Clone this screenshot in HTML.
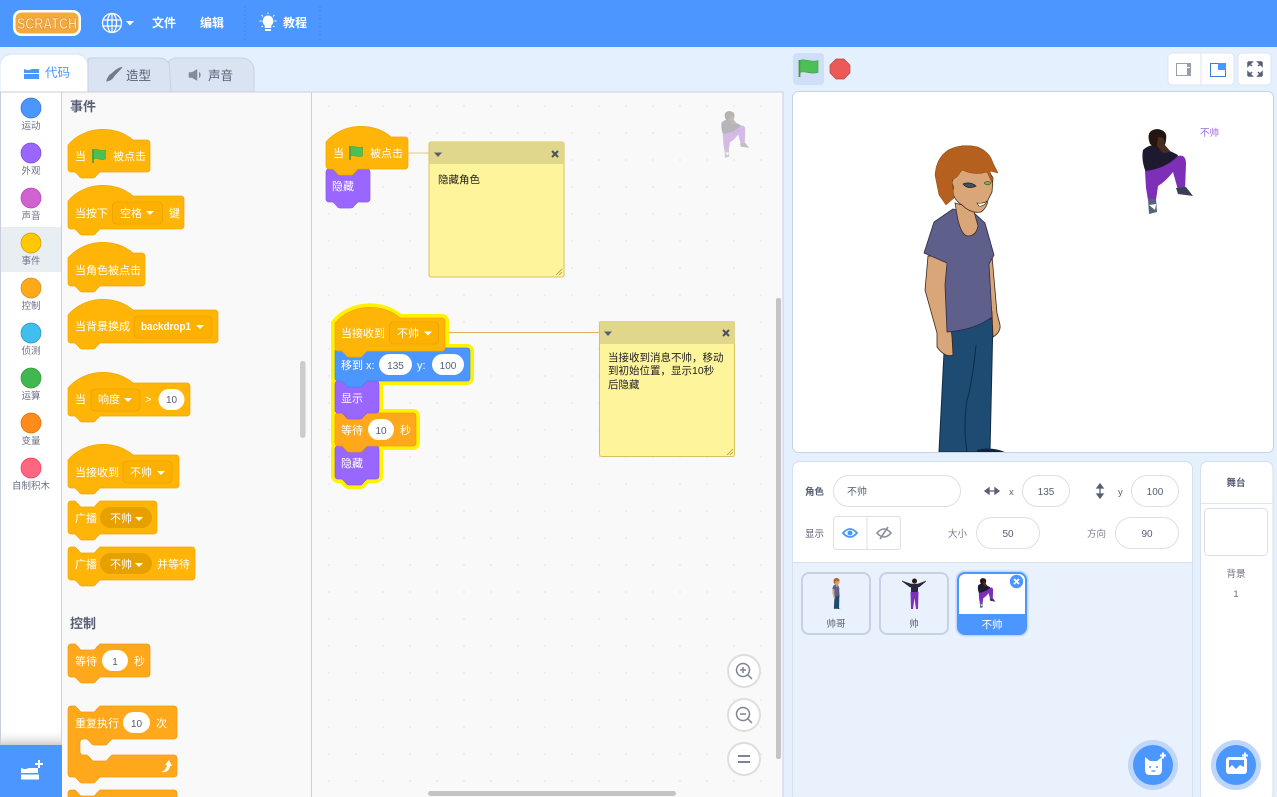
<!DOCTYPE html>
<html lang="zh"><head><meta charset="utf-8"><title>Scratch</title>
<style>
html,body{margin:0;padding:0;width:1277px;height:797px;overflow:hidden;background:#E5F0FF}
svg{display:block;position:absolute;left:0;top:0}
text{font-family:"Liberation Sans","Noto Sans CJK SC",sans-serif}
.w{fill:#fff;font-size:11px}
.g{fill:#6b7186;font-size:9.5px;text-anchor:middle}
.n{fill:#575E75;font-size:10px;text-anchor:middle}
.h{fill:#575E75;font-size:13px;font-weight:bold}
.c{fill:#222;font-size:10.5px}
.l{fill:#575E75;font-size:9.5px}
.t{fill:#fff;font-size:12px;font-weight:bold}
.e{fill:#FFB508;stroke:#EFA800;stroke-width:.7}
.o{fill:#FFA81C;stroke:#EC9A10;stroke-width:.7}
.p{fill:#9966FF;stroke:#8A55EE;stroke-width:.7}
.b{fill:#4C97FF;stroke:#4088EC;stroke-width:.7}
.d{fill:#FCB100;stroke:#EBA200;stroke-width:.8}
.y{fill:#FFF200;stroke:#FFF200;stroke-width:8;stroke-linejoin:round}
</style></head><body>
<svg width="1277" height="797" viewBox="0 0 1277 797" xmlns="http://www.w3.org/2000/svg">
<defs>
<pattern id="dots" x="328" y="105" width="27" height="27" patternUnits="userSpaceOnUse"><rect width="2" height="2" fill="#eeeeee"/></pattern>
<linearGradient id="sh" x1="0" y1="0" x2="0" y2="1"><stop offset="0" stop-color="#fff" stop-opacity="0"/><stop offset="1" stop-color="#cfcfcf"/></linearGradient>
<clipPath id="stageclip"><rect x="793" y="92" width="480" height="360"/></clipPath>
<symbol id="flag" overflow="visible" viewBox="0 0 16 16" width="16" height="16"><path d="M2 1V15" stroke="#45993D" stroke-width="1.600" fill="none"/><path d="M2.500 2c4-2 7 2 12 0v9c-5 2-8-2-12 0z" fill="#4CBF56" stroke="#45993D" stroke-width=".5"/></symbol>
<g id="boy">
 <path d="M945 333L939 452H990L993 318z" fill="#1D4B72" stroke="#0d2c47" stroke-width="1"/>
 <path d="M976 345Q972 385 967 400Q963 425 967 452" fill="none" stroke="#0d2c47" stroke-width="1"/>
 <path d="M977 450Q992 446 1007 453H977z" fill="#0d2440"/>
 <path d="M928 256L925 290L937 333L937 347Q945 358 953 355L952 337L946 285L948 256z" fill="#D9A679" stroke="#3a2515" stroke-width=".8"/>
 <path d="M983 256L987 287L992 312L993 337Q1001 332 1000 325L997 313L995 290L992 256z" fill="#D9A679" stroke="#3a2515" stroke-width=".8"/>
 <path d="M953 209L934 222L924 253L947 263L945 285L947 332Q975 330 992 317L989 264L994 255L985 223L973 212z" fill="#5E5F8B" stroke="#2c2c4a" stroke-width=".8"/>
 <path d="M955 203L958 220Q962 236 968 236Q976 236 978 226L973 208z" fill="#D9A679" stroke="#3a2515" stroke-width=".7"/>
 <path d="M956 168L951 186Q953 200 962 205Q971 214 981 212Q987 208 988 200L992 192L993 178L985 165z" fill="#D9A679" stroke="#3a2515" stroke-width=".8"/>
 <ellipse cx="949" cy="188" rx="4.500" ry="6" fill="#D9A679" stroke="#3a2515" stroke-width=".7"/>
 <path d="M963 184Q970 181 976 186Q968 190 963 184z" fill="#46505a" stroke="#222" stroke-width=".7"/>
 <path d="M984 183Q988 180 991 183Q988 187 984 183z" fill="#6dbb3d" stroke="#222" stroke-width=".5"/>
 <path d="M977 203Q983 204 987 201Q984 207 979 206z" fill="#fff" stroke="#3a2515" stroke-width=".6"/>
 <path d="M935 175Q936 158 948 150Q962 143 978 147Q990 152 993 163L998 173L990 171L993 185L987 172Q975 176 962 170L957 177L952 180L954 198L946 205L939 195z" fill="#B5601F" stroke="#8b4513" stroke-width=".5"/>
</g>
<g id="kneel">
 <path d="M1143 150Q1150 143 1160 146L1178 155L1172 172L1146 173Q1141 160 1143 150z" fill="#1d1a30"/>
 <path d="M1145 171Q1165 169 1178 156Q1186 154 1186 164L1185 190L1178 190L1173 172Q1165 182 1158 186L1156 200L1148 200L1146 188z" fill="#7E2FB8"/>
 <path d="M1150 144Q1145 130 1157 129Q1168 130 1166 140Q1165 150 1157 149z" fill="#241510"/>
 <path d="M1158 137Q1166 137 1164 144L1171 152L1163 153L1157 146z" fill="#4a2c20"/>
 <path d="M1176 188L1186 187L1193 196L1178 194z" fill="#3a4050"/>
 <path d="M1148 199L1156 199L1157 212L1149 214z" fill="#56637a"/>
 <path d="M1149 205L1156 204L1155 210z" fill="#fff"/>
</g>
</defs>

<!-- header -->
<rect width="1277" height="47" fill="#4C97FF"/>
<rect x="13" y="10" width="68" height="26" rx="8" fill="#fff"/>
<rect x="15.500" y="12.500" width="63" height="21" rx="6" fill="#F7A93C"/>
<text x="17" y="29" textLength="60" lengthAdjust="spacingAndGlyphs" style="font-family:'Liberation Sans',sans-serif;font-size:16px;font-weight:bold;fill:#FFE6B8" stroke="#D0841C" stroke-width=".5">SCRATCH</text>
<g fill="none" stroke="#fff" stroke-width="1.300"><circle cx="112" cy="23" r="9.500"/><ellipse cx="112" cy="23" rx="4.500" ry="9.500"/><path d="M103 20H121M103 26H121M112 13.500V32.500"/></g>
<path d="M126 21H134L130 25.500z" fill="#fff"/>
<text class="t" x="152" y="27">文件</text><text class="t" x="200" y="27">编辑</text>
<path d="M245 6V40M320 6V40" stroke="#3F88EA" stroke-width="1" stroke-dasharray="2 2"/>
<path d="M268 15.500a5.500 5.500 0 0 1 3.300 9.800V28H264.700V25.300A5.500 5.500 0 0 1 268 15.500z" fill="#fff"/><rect x="265" y="29" width="6" height="2" fill="#fff"/>
<path d="M259.500 21H261.500M274.500 21H276.500M261.500 15L263 16.500M274.500 15L273 16.500M268 12.500V14M261.500 27L263 26M274.500 27L273 26" stroke="#fff" stroke-width="1"/>
<text class="t" x="283" y="27">教程</text>

<!-- tabs -->
<path d="M88 92V66a12 12 0 0 0-12-12H12A12 12 0 0 0 0 66V92z" fill="#fff" stroke="#D9E3F2"/>
<path d="M171 92V70a12 12 0 0 0-12-12H90L88 59V92z" fill="#D9E3F2" stroke="#C6D2E2"/>
<path d="M254 92V70a12 12 0 0 0-12-12H176a12 12 0 0 0-7 3L171 92z" fill="#D9E3F2" stroke="#C6D2E2"/>
<path d="M24 69l3 1h2l3-1h7v4H24zM24 74h15v5H24z" fill="#4C97FF"/>
<text x="45" y="77" style="font-size:12.500px;fill:#4C97FF">代码</text>
<path d="M106 81.500Q112 81 114.500 76L122 68Q123 67 121.500 67Q117 68 112 73Q108 75 106 81.500z" fill="#75798A"/>
<text x="126" y="80" style="font-size:12.500px;fill:#575E75">造型</text>
<path d="M189 72.500H192L197 69.500V80.500L192 77.500H189zM199 72Q202 75 199 78" fill="#85899a" stroke="#85899a" stroke-width=".5"/>
<text x="208" y="80" style="font-size:12.500px;fill:#575E75">声音</text>

<!-- left panels -->
<rect x="0" y="92" width="783" height="705" fill="#F9F9F9"/>
<rect x="0" y="92" width="62" height="705" fill="#fff"/>
<rect x="312" y="92" width="471" height="705" fill="#F9F9F9"/>
<rect x="312" y="92" width="471" height="705" fill="url(#dots)"/>
<path d="M.5 797V92H783V797M61.500 92V797M311.500 92V797" fill="none" stroke="#C9D0DB"/>
<rect x="1" y="227" width="60" height="45" fill="#E9EEF2"/>
<circle cx="31" cy="108" r="10" fill="#4C97FF" stroke="#3373CC" stroke-width=".7"/><text class="g" x="31" y="129">运动</text>
<circle cx="31" cy="153" r="10" fill="#9966FF" stroke="#774DCB" stroke-width=".7"/><text class="g" x="31" y="174">外观</text>
<circle cx="31" cy="198" r="10" fill="#CF63CF" stroke="#BD42BD" stroke-width=".7"/><text class="g" x="31" y="219">声音</text>
<circle cx="31" cy="243" r="10" fill="#FFC800" stroke="#CC9900" stroke-width=".7"/><text class="g" x="31" y="264">事件</text>
<circle cx="31" cy="288" r="10" fill="#FFAB19" stroke="#CF8B17" stroke-width=".7"/><text class="g" x="31" y="309">控制</text>
<circle cx="31" cy="333" r="10" fill="#40BFEF" stroke="#2E8EB8" stroke-width=".7"/><text class="g" x="31" y="354">侦测</text>
<circle cx="31" cy="378" r="10" fill="#3FB94F" stroke="#389438" stroke-width=".7"/><text class="g" x="31" y="399">运算</text>
<circle cx="31" cy="423" r="10" fill="#FF8C1A" stroke="#DB6E00" stroke-width=".7"/><text class="g" x="31" y="444">变量</text>
<circle cx="31" cy="468" r="10" fill="#FF6680" stroke="#FF3355" stroke-width=".7"/><text class="g" x="31" y="489">自制积木</text>
<rect x="1" y="729" width="60" height="16" fill="url(#sh)"/>
<rect x="0" y="745" width="62" height="52" fill="#4C97FF"/>
<path d="M21 768l3 1h2l3-1h9v5H21zM21 774.500h18v5H21z" fill="#fff"/><path d="M35 764H43M39 760V768" stroke="#fff" stroke-width="2"/>

<!-- palette -->
<text class="h" x="70" y="111">事件</text>
<path class="e" transform="translate(68 140)" d="M0 5c17-20 48-20 65-5h14a3 3 0 0 1 3 3v26a3 3 0 0 1-3 3H32l-4 4q-1 2-3 2H14q-2 0-3-2l-4-4H3a3 3 0 0 1-3-3z"/>
<text class="w" x="75" y="160">当</text><use href="#flag" x="91" y="148"/><text class="w" x="113" y="160">被点击</text>

<path class="e" transform="translate(68 196)" d="M0 5c17-20 48-20 65-5h48a3 3 0 0 1 3 3v27a3 3 0 0 1-3 3H32l-4 4q-1 2-3 2H14q-2 0-3-2l-4-4H3a3 3 0 0 1-3-3z"/>
<text class="w" x="75" y="217">当按下</text><rect class="d" x="112.500" y="202" width="50" height="22" rx="4"/><text class="w" x="120" y="217">空格</text><path d="M146 211H154L150 215z" fill="#fff"/><text class="w" x="169" y="217">键</text>

<path class="e" transform="translate(68 253)" d="M0 5c17-20 48-20 65-5h9a3 3 0 0 1 3 3v27a3 3 0 0 1-3 3H32l-4 4q-1 2-3 2H14q-2 0-3-2l-4-4H3a3 3 0 0 1-3-3z"/>
<text class="w" x="75" y="274">当角色被点击</text>

<path class="e" transform="translate(68 310)" d="M0 5c17-20 48-20 65-5h82a3 3 0 0 1 3 3v27a3 3 0 0 1-3 3H32l-4 4q-1 2-3 2H14q-2 0-3-2l-4-4H3a3 3 0 0 1-3-3z"/>
<text class="w" x="75" y="330">当背景换成</text><rect class="d" x="134" y="316" width="78" height="22" rx="4"/><text class="w" x="141" y="330" font-weight="bold" textLength="50" lengthAdjust="spacingAndGlyphs">backdrop1</text><path d="M196 325H204L200 329z" fill="#fff"/>

<path class="e" transform="translate(68 383)" d="M0 5c17-20 48-20 65-5h54a3 3 0 0 1 3 3v27a3 3 0 0 1-3 3H32l-4 4q-1 2-3 2H14q-2 0-3-2l-4-4H3a3 3 0 0 1-3-3z"/>
<text class="w" x="75" y="403">当</text><rect class="d" x="91" y="389" width="49" height="22" rx="4"/><text class="w" x="98" y="403">响度</text><path d="M124 398H132L128 402z" fill="#fff"/><text class="w" x="145" y="403">&gt;</text><rect x="158.500" y="389" width="26" height="21" rx="10.500" fill="#fff"/><text class="n" x="171.500" y="403">10</text>

<path class="e" transform="translate(68 455)" d="M0 5c17-20 48-20 65-5h43a3 3 0 0 1 3 3v27a3 3 0 0 1-3 3H32l-4 4q-1 2-3 2H14q-2 0-3-2l-4-4H3a3 3 0 0 1-3-3z"/>
<text class="w" x="75" y="476">当接收到</text><rect class="d" x="123" y="461" width="49" height="22" rx="4"/><text class="w" x="130" y="476">不帅</text><path d="M157 471H165L161 475z" fill="#fff"/>

<path class="e" transform="translate(68 501)" d="M0 3a3 3 0 0 1 3-3h4l4 4q1 2 3 2h11q2 0 3-2l4-4h54a3 3 0 0 1 3 3v27a3 3 0 0 1-3 3H32l-4 4q-1 2-3 2H14q-2 0-3-2l-4-4H3a3 3 0 0 1-3-3z"/>
<text class="w" x="75" y="522">广播</text><rect x="100" y="507" width="52" height="21" rx="10.500" fill="#E6A000"/><text class="w" x="110" y="522">不帅</text><path d="M135 517H143L139 521z" fill="#fff"/>

<path class="e" transform="translate(68 547)" d="M0 3a3 3 0 0 1 3-3h4l4 4q1 2 3 2h11q2 0 3-2l4-4h92a3 3 0 0 1 3 3v27a3 3 0 0 1-3 3H32l-4 4q-1 2-3 2H14q-2 0-3-2l-4-4H3a3 3 0 0 1-3-3z"/>
<text class="w" x="75" y="568">广播</text><rect x="100" y="553" width="52" height="21" rx="10.500" fill="#E6A000"/><text class="w" x="110" y="568">不帅</text><path d="M135 563H143L139 567z" fill="#fff"/><text class="w" x="157" y="568">并等待</text>

<text class="h" x="70" y="628">控制</text>
<path class="o" transform="translate(68 644)" d="M0 3a3 3 0 0 1 3-3h4l4 4q1 2 3 2h11q2 0 3-2l4-4h47a3 3 0 0 1 3 3v27a3 3 0 0 1-3 3H32l-4 4q-1 2-3 2H14q-2 0-3-2l-4-4H3a3 3 0 0 1-3-3z"/>
<text class="w" x="75" y="665">等待</text><rect x="102" y="650" width="26" height="21" rx="10.500" fill="#fff"/><text class="n" x="115" y="665">1</text><text class="w" x="134" y="665">秒</text>

<path class="o" transform="translate(68 706)" d="M0 3a3 3 0 0 1 3-3h4l4 4q1 2 3 2h11q2 0 3-2l4-4h74a3 3 0 0 1 3 3v27a3 3 0 0 1-3 3H44l-4 4q-1 2-3 2H26q-2 0-3-2l-4-4h-4a3 3 0 0 0-3 3v10a3 3 0 0 0 3 3h4l4 4q1 2 3 2h11q2 0 3-2l4-4H106a3 3 0 0 1 3 3v16a3 3 0 0 1-3 3H32l-4 4q-1 2-3 2H14q-2 0-3-2l-4-4H3a3 3 0 0 1-3-3z"/>
<text class="w" x="75" y="727">重复执行</text><rect x="123" y="712" width="27" height="21" rx="10.500" fill="#fff"/><text class="n" x="136.500" y="727">10</text><text class="w" x="156" y="727">次</text>
<path d="M161 772Q166 771 167 765H165L169 760L172 766H170Q169 773 161 772z" fill="#fff"/>
<path class="o" transform="translate(68 790)" d="M0 3a3 3 0 0 1 3-3h4l4 4q1 2 3 2h11q2 0 3-2l4-4h74a3 3 0 0 1 3 3v27H0z"/>
<rect x="300" y="361" width="5.500" height="77" rx="2.500" fill="#CCCCCC"/>

<!-- workspace: stack 1 -->
<path d="M408 153H429" stroke="#E6C68C" stroke-width="1"/>
<path class="p" transform="translate(326 169)" d="M0 3a3 3 0 0 1 3-3h4l4 4q1 2 3 2h11q2 0 3-2l4-4h9a3 3 0 0 1 3 3v27a3 3 0 0 1-3 3H32l-4 4q-1 2-3 2H14q-2 0-3-2l-4-4H3a3 3 0 0 1-3-3z"/>
<path class="e" transform="translate(326 137)" d="M0 5c17-20 48-20 65-5h14a3 3 0 0 1 3 3v26a3 3 0 0 1-3 3H32l-4 4q-1 2-3 2H14q-2 0-3-2l-4-4H3a3 3 0 0 1-3-3z"/>
<text class="w" x="333" y="157">当</text><use href="#flag" x="348" y="145"/><text class="w" x="370" y="157">被点击</text>
<text class="w" x="332" y="190">隐藏</text>

<!-- comment 1 -->
<rect x="429" y="142" width="135" height="135" rx="2" fill="#FEF49C" stroke="#D9C25E"/>
<path d="M429.500 164V144a2 2 0 0 1 2-2H562a2 2 0 0 1 2 2V164z" fill="#E0D68C"/>
<path d="M434 152.500H442L438 157z" fill="#575E75"/>
<path d="M552 151L558 157M558 151L552 157" stroke="#4c4f5e" stroke-width="2"/>
<text class="c" x="438" y="183">隐藏角色</text>
<path d="M556 275L562 269M559 275L562 272" stroke="#a89a50" stroke-width=".8"/>

<!-- workspace stack 2 glow -->
<path d="M445 332.500H599" stroke="#E0B060" stroke-width="1"/>
<g class="y">
<path transform="translate(335 446)" d="M0 3a3 3 0 0 1 3-3h4l4 4q1 2 3 2h11q2 0 3-2l4-4h9a3 3 0 0 1 3 3v27a3 3 0 0 1-3 3H32l-4 4q-1 2-3 2H14q-2 0-3-2l-4-4H3a3 3 0 0 1-3-3z"/>
<path transform="translate(335 413)" d="M0 3a3 3 0 0 1 3-3h75a3 3 0 0 1 3 3v27a3 3 0 0 1-3 3H3a3 3 0 0 1-3-3z"/>
<path transform="translate(335 381)" d="M0 3a3 3 0 0 1 3-3h38a3 3 0 0 1 3 3v27a3 3 0 0 1-3 3H3a3 3 0 0 1-3-3z"/>
<path transform="translate(335 348)" d="M0 3a3 3 0 0 1 3-3h129a3 3 0 0 1 3 3v27a3 3 0 0 1-3 3H3a3 3 0 0 1-3-3z"/>
<path transform="translate(335 318)" d="M0 5c17-20 48-20 65-5h42a3 3 0 0 1 3 3v27a3 3 0 0 1-3 3H3a3 3 0 0 1-3-3z"/>
</g>
<path class="p" transform="translate(335 446)" d="M0 3a3 3 0 0 1 3-3h4l4 4q1 2 3 2h11q2 0 3-2l4-4h9a3 3 0 0 1 3 3v27a3 3 0 0 1-3 3H32l-4 4q-1 2-3 2H14q-2 0-3-2l-4-4H3a3 3 0 0 1-3-3z"/>
<path class="o" transform="translate(335 413)" d="M0 3a3 3 0 0 1 3-3h4l4 4q1 2 3 2h11q2 0 3-2l4-4h46a3 3 0 0 1 3 3v27a3 3 0 0 1-3 3H32l-4 4q-1 2-3 2H14q-2 0-3-2l-4-4H3a3 3 0 0 1-3-3z"/>
<path class="p" transform="translate(335 381)" d="M0 3a3 3 0 0 1 3-3h4l4 4q1 2 3 2h11q2 0 3-2l4-4h9a3 3 0 0 1 3 3v26a3 3 0 0 1-3 3H32l-4 4q-1 2-3 2H14q-2 0-3-2l-4-4H3a3 3 0 0 1-3-3z"/>
<path class="b" transform="translate(335 348)" d="M0 3a3 3 0 0 1 3-3h4l4 4q1 2 3 2h11q2 0 3-2l4-4h100a3 3 0 0 1 3 3v27a3 3 0 0 1-3 3H32l-4 4q-1 2-3 2H14q-2 0-3-2l-4-4H3a3 3 0 0 1-3-3z"/>
<path class="e" transform="translate(335 318)" d="M0 5c17-20 48-20 65-5h42a3 3 0 0 1 3 3v27a3 3 0 0 1-3 3H32l-4 4q-1 2-3 2H14q-2 0-3-2l-4-4H3a3 3 0 0 1-3-3z"/>
<text class="w" x="341" y="337">当接收到</text><rect class="d" x="389.500" y="322" width="49" height="22" rx="4"/><text class="w" x="397" y="337">不帅</text><path d="M424 331.500H432L428 335.500z" fill="#fff"/>
<text class="w" x="341" y="369">移到 x:</text><rect x="379" y="354" width="33" height="21" rx="10.500" fill="#fff"/><text class="n" x="395.500" y="369">135</text><text class="w" x="417" y="369">y:</text><rect x="432" y="354" width="32" height="21" rx="10.500" fill="#fff"/><text class="n" x="448" y="369">100</text>
<text class="w" x="341" y="402">显示</text>
<text class="w" x="341" y="434">等待</text><rect x="368" y="419" width="26" height="21" rx="10.500" fill="#fff"/><text class="n" x="381" y="434">10</text><text class="w" x="400" y="434">秒</text>
<text class="w" x="341" y="467">隐藏</text>

<!-- comment 2 -->
<rect x="599.500" y="321.500" width="135" height="135" rx="2" fill="#FEF49C" stroke="#D9C25E"/>
<path d="M600 344V323a2 2 0 0 1 2-2H733a2 2 0 0 1 2 2V344z" fill="#E0D68C"/>
<path d="M604 331.500H612L608 336z" fill="#575E75"/>
<path d="M723 330L729 336M729 330L723 336" stroke="#4c4f5e" stroke-width="2"/>
<text class="c" x="608" y="361">当接收到消息不帅，移动</text>
<text class="c" x="608" y="374">到初始位置，显示10秒</text>
<text class="c" x="608" y="388">后隐藏</text>
<path d="M727 455L733 449M730 455L733 452" stroke="#a89a50" stroke-width=".8"/>

<!-- workspace sprite ghost -->
<g opacity=".3"><use href="#kneel" transform="translate(93 40) scale(.55)"/></g>

<!-- zoom controls -->
<g fill="#fff" stroke="#DEDEDE" stroke-width="2"><circle cx="744" cy="671" r="16"/><circle cx="744" cy="715" r="16"/><circle cx="744" cy="759" r="16"/></g>
<g fill="none" stroke="#7E8494" stroke-width="1.500"><circle cx="743" cy="670" r="6.500"/><path d="M748 675L752 679M740 670H746M743 667V673"/><circle cx="743" cy="714" r="6.500"/><path d="M748 719L752 723M740 714H746"/></g>
<path d="M738 756H750M738 762H750" stroke="#7E8494" stroke-width="2"/>
<rect x="776" y="298" width="5" height="461" rx="2" fill="#C4C4C4"/>
<rect x="428" y="791" width="248" height="5" rx="2.500" fill="#C4C4C4"/>

<!-- stage header -->
<rect x="793" y="53" width="31" height="32" rx="4" fill="#CFDFF8"/>
<path d="M799.500 60V77" stroke="#45993D" stroke-width="1.800"/><path d="M800 60.500c5-2.500 10 2.500 18 0v12c-8 2.500-13-2.500-18 0z" fill="#4CBF56" stroke="#45993D" stroke-width=".6"/>
<path d="M836 59H844L850 65V73L844 79H836L830 73V65z" fill="#EC5959" stroke="#B84848" stroke-width=".7"/>
<rect x="1168" y="53" width="66" height="32" rx="4" fill="#fff" stroke="#DCE5F2"/><path d="M1201 53V85" stroke="#DCE5F2"/>
<rect x="1176.500" y="63.500" width="14" height="12" fill="#fff" stroke="#9a9ea9" stroke-width="1"/><rect x="1187" y="63" width="4" height="4" fill="#9a9ea9"/><rect x="1187" y="68" width="4" height="8" fill="#9a9ea9"/>
<rect x="1210.500" y="63.500" width="15" height="13" fill="#fff" stroke="#3d7dd0" stroke-width="1"/><rect x="1218" y="63" width="8" height="7" fill="#4C97FF"/>
<rect x="1238" y="53" width="33" height="32" rx="4" fill="#fff" stroke="#DCE5F2"/>
<path d="M1248 62L1252 66M1248 62H1252L1248 66V62M1262 62L1258 66M1262 62H1258L1262 66V62M1248 76L1252 72M1248 76H1252L1248 72V76M1262 76L1258 72M1262 76H1258L1262 72V76" stroke="#575E75" stroke-width="1.500" fill="#575E75"/>

<!-- stage -->
<rect x="792.500" y="91.500" width="481" height="361" rx="6" fill="#fff" stroke="#C8D2E0"/>
<g clip-path="url(#stageclip)"><use href="#boy"/></g>
<use href="#kneel"/>
<text x="1200" y="136" style="font-size:9.500px;fill:#9A66E0">不帅</text>

<!-- sprite panel -->
<rect x="792.500" y="461.500" width="400" height="340" rx="7" fill="#E9F1FC" stroke="#D5DFEE"/>
<path d="M793 562V469a7 7 0 0 1 7-7H1185a7 7 0 0 1 7 7V562z" fill="#fff"/>
<path d="M793 562.500H1192" stroke="#D5DFEE"/>
<text class="l" x="805" y="495" font-weight="bold">角色</text>
<rect x="833.500" y="475.500" width="127" height="31" rx="15.500" fill="#fff" stroke="#DFDFDF"/><text class="n" x="857" y="495" font-size="10">不帅</text>
<path d="M986 491H998M989 488L985 491L989 494zM995 488L999 491L995 494z" stroke="#575E75" stroke-width="1.300" fill="#575E75"/>
<text class="l" x="1009" y="495">x</text>
<rect x="1022.500" y="475.500" width="47" height="31" rx="15.500" fill="#fff" stroke="#DFDFDF"/><text class="n" x="1046" y="495">135</text>
<path d="M1100 485V497M1097 488L1100 484L1103 488zM1097 494L1100 498L1103 494z" stroke="#575E75" stroke-width="1.300" fill="#575E75"/>
<text class="l" x="1118" y="495">y</text>
<rect x="1131.500" y="475.500" width="47" height="31" rx="15.500" fill="#fff" stroke="#DFDFDF"/><text class="n" x="1155" y="495">100</text>
<text class="l" x="805" y="537">显示</text>
<rect x="833.500" y="516.500" width="67" height="33" rx="3" fill="#fff" stroke="#DFDFDF"/><path d="M867 517V549" stroke="#DFDFDF"/>
<path d="M843 533Q850 525 857 533Q850 541 843 533z" fill="#fff" stroke="#4C97FF" stroke-width="1.800"/><circle cx="850" cy="533" r="2.500" fill="#4C97FF"/>
<path d="M877 533Q884 525 891 533Q884 541 877 533zM880 539L888 527" fill="none" stroke="#8a8e9a" stroke-width="1.600"/>
<text class="l" x="948" y="537" fill-opacity=".8">大小</text>
<rect x="976.500" y="517.500" width="63" height="31" rx="15.500" fill="#fff" stroke="#DFDFDF"/><text class="n" x="1008" y="537">50</text>
<text class="l" x="1087" y="537" fill-opacity=".8">方向</text>
<rect x="1115.500" y="517.500" width="63" height="31" rx="15.500" fill="#fff" stroke="#DFDFDF"/><text class="n" x="1147" y="537">90</text>

<!-- sprite tiles -->
<rect x="802" y="573" width="68" height="61" rx="7" fill="#E9F1FC" stroke="#C6D2E2" stroke-width="2"/>
<use href="#boy" transform="translate(740 563.500) scale(.1)"/>
<text class="n" x="836" y="627" style="font-size:9.500px">帅哥</text>
<rect x="880" y="573" width="68" height="61" rx="7" fill="#E9F1FC" stroke="#C6D2E2" stroke-width="2"/>
<path d="M902 581L911 584H918L926 581L919 587H910z" fill="#2a2540" stroke="#2a2540" stroke-width=".6"/>
<circle cx="914.500" cy="581" r="2.500" fill="#2a1a14"/>
<rect x="911" y="584" width="7" height="9" fill="#2a2540"/>
<path d="M910.500 592H918.500L918 609H916L914.500 598L913 609H911z" fill="#7E2FB8"/>
<text class="n" x="914" y="627" style="font-size:9.500px">帅</text>
<rect x="955.500" y="570.500" width="73" height="66" rx="9" fill="#C3D9F8"/>
<rect x="958" y="573" width="68" height="61" rx="7" fill="#fff" stroke="#4C97FF" stroke-width="2"/>
<path d="M958 614H1026V627a7 7 0 0 1-7 7H965a7 7 0 0 1-7-7z" fill="#4C97FF"/>
<use href="#kneel" transform="translate(578 533) scale(.35)"/>
<text x="992" y="628" text-anchor="middle" style="font-size:10.500px;fill:#fff">不帅</text>
<circle cx="1016.500" cy="581.500" r="7" fill="#4C97FF" stroke="#fff" stroke-width=".6"/><path d="M1014 579L1019 584M1019 579L1014 584" stroke="#fff" stroke-width="1.800"/>

<!-- stage pane -->
<rect x="1200.500" y="461.500" width="72.500" height="340" rx="7" fill="#fff" stroke="#D5DFEE"/>
<text x="1236" y="486" text-anchor="middle" style="font-size:9.500px;font-weight:bold;fill:#575E75">舞台</text>
<path d="M1201 503.500H1273" stroke="#DDE5F0"/>
<rect x="1204.500" y="508.500" width="63" height="47" rx="4" fill="#fff" stroke="#D5DFEE"/>
<text class="g" x="1236" y="577">背景</text><text class="g" x="1236" y="597">1</text>

<!-- add buttons -->
<circle cx="1153" cy="765" r="25" fill="#BDD6F9"/><circle cx="1153" cy="765" r="20" fill="#4C97FF"/>
<path d="M1145 757L1150 761H1157L1162 757V770Q1162 775 1157 775H1150Q1145 775 1145 770z" fill="#fff"/><path d="M1151.500 771H1155.500" stroke="#4C97FF" stroke-width="1.300"/><circle cx="1150" cy="767" r="1" fill="#4C97FF"/><circle cx="1157" cy="767" r="1" fill="#4C97FF"/>
<path d="M1160 755.500H1166M1163 752.500V758.500" stroke="#fff" stroke-width="2"/>
<circle cx="1236" cy="765" r="25" fill="#BDD6F9"/><circle cx="1236" cy="765" r="20" fill="#4C97FF"/>
<rect x="1226" y="757" width="21" height="17" rx="3" fill="#fff"/><path d="M1229 760H1244V767L1240 765L1236 769L1232 765L1229 768z" fill="#4C97FF"/>
<path d="M1242 755.500H1248M1245 752.500V758.500" stroke="#fff" stroke-width="2"/>
</svg>
</body></html>
